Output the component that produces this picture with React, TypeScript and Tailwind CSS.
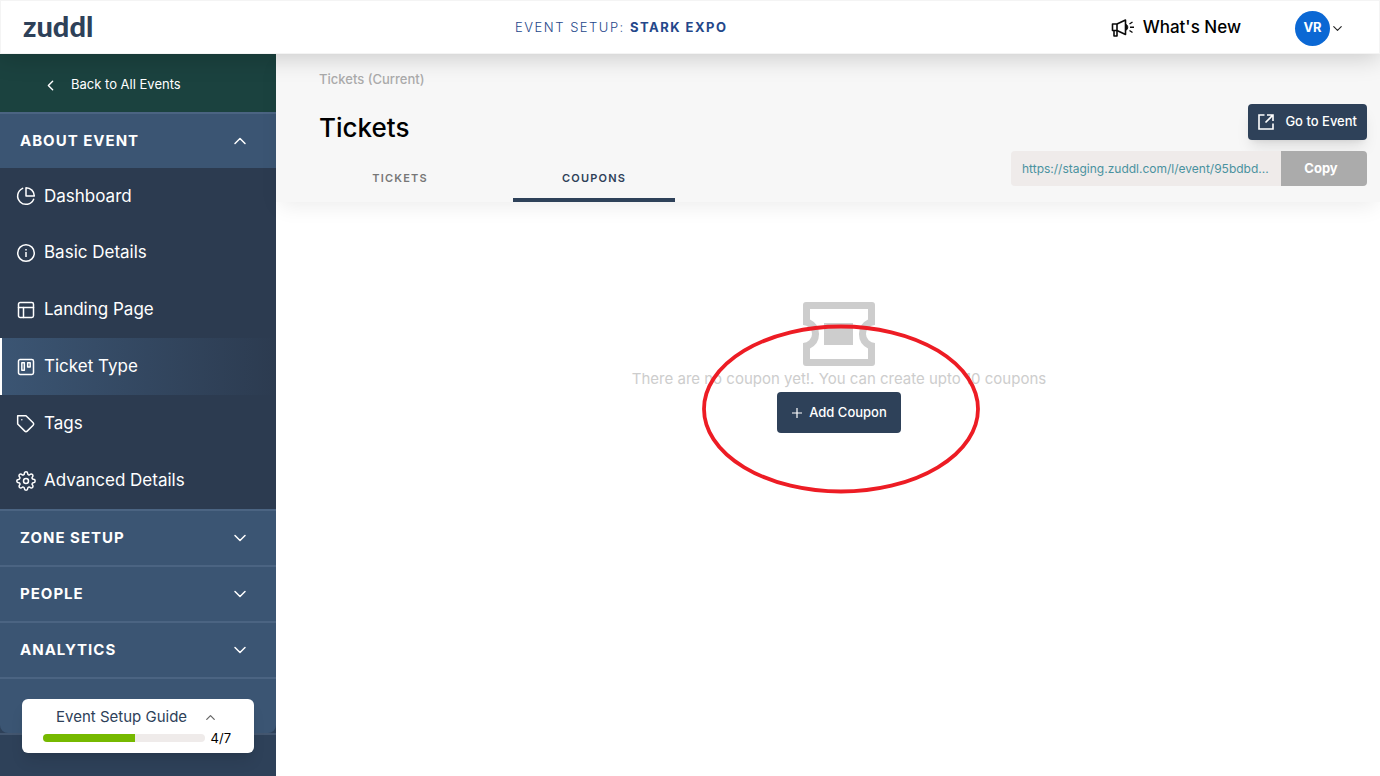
import React from "react";
import { FiPieChart, FiLayout, FiTrello, FiTag, FiSettings, FiChevronDown, FiChevronUp, FiChevronLeft } from "react-icons/fi";

function InfoIcon() {
  return (
    <svg aria-hidden="true" width="20" height="20" viewBox="0 0 20 20" fill="none" stroke="currentColor" strokeWidth="1.5">
      <circle cx="10" cy="10" r="8.3" />
      <path d="M10 9v5M10 6v1.6" />
    </svg>
  );
}

const navItems = [
  { label: "Dashboard", icon: <FiPieChart size={20} strokeWidth={1.8} /> },
  { label: "Basic Details", icon: <InfoIcon /> },
  { label: "Landing Page", icon: <FiLayout size={20} strokeWidth={1.8} /> },
  { label: "Ticket Type", icon: <FiTrello size={20} strokeWidth={1.8} />, active: true },
  { label: "Tags", icon: <FiTag size={20} strokeWidth={1.8} /> },
  { label: "Advanced Details", icon: <FiSettings size={20} strokeWidth={1.8} /> },
];

function MegaphoneIcon() {
  return (
    <svg aria-hidden="true" width="24" height="20" viewBox="0 0 24 20" fill="none" stroke="#0a0a0a" strokeWidth="1.6" strokeLinejoin="round">
      <path d="M1.500 6H6v6.500H1.500z" />
      <path d="M6 6 14.500 2v14.500L6 12.500" />
      <path d="M3 12.500V18h3v-5.500" />
      <path d="M15 6.500c2.300.6 2.300 5 0 5.600Z" fill="#0a0a0a" strokeWidth="1" />
      <path d="M19 9.300h4M18.500 6l3-2M18.500 12.500l3 2" strokeWidth="1.400" />
    </svg>
  );
}

function TicketIcon() {
  return (
    <svg aria-hidden="true" width="72" height="64" viewBox="0 0 72 64" fill="none">
      <path
        fillRule="evenodd"
        fill="#cdcdcd"
        d="M3 0h66a3 3 0 0 1 3 3v20a9 9 0 0 0 0 18v20a3 3 0 0 1-3 3H3a3 3 0 0 1-3-3V41a9 9 0 0 0 0-18V3a3 3 0 0 1 3-3ZM7 7v10.600A16 16 0 0 1 7 46.400V57h58V46.400A16 16 0 0 1 65 17.600V7Z"
      />
      <path fill="#cdcdcd" d="M21 21h29v22H21z" />
    </svg>
  );
}

function OpenIcon() {
  return (
    <svg aria-hidden="true" width="16" height="16" viewBox="0 0 16 16" fill="none" stroke="#fff" strokeWidth="1.600">
      <path d="M6.500 1H1v14h14V9.500" />
      <path d="M9 1h6v6M15 1 7.500 8.500" />
    </svg>
  );
}

function Section({ label, open = false }: { label: string; open?: boolean }) {
  const Chevron = open ? FiChevronUp : FiChevronDown;
  return (
    <button
      type="button"
      aria-expanded={open}
      className="flex h-14 w-full items-center justify-between border-t-2 border-[#4b6482] bg-[#3b5573] pr-[26px] pl-5 text-[15px] font-bold tracking-[1px] text-white"
    >
      {label}
      <Chevron size={20} strokeWidth={1.8} />
    </button>
  );
}

function Sidebar() {
  return (
    <aside className="flex w-[276px] shrink-0 flex-col bg-[#2e4159]">
      <a href="#events" className="flex h-[58px] items-center gap-3 bg-[#1b423f] pt-1 pl-[42px] text-[13px] text-white">
        <FiChevronLeft size={17} strokeWidth={2} />
        Back to All Events
      </a>
      <Section label="ABOUT EVENT" open />
      <nav className="grid h-[341px] grid-rows-6 bg-[#2c3b50]">
        {navItems.map(({ label, icon, active }) => (
          <a
            key={label}
            href="#section"
            aria-current={active ? "page" : undefined}
            className={
              active
                ? "flex items-center gap-2 border-l-2 border-white bg-linear-to-r from-[#3b5573] to-[#2c3b50] pl-[14px] text-[17px] text-white"
                : "flex items-center gap-2 pl-4 text-[17px] text-white"
            }
          >
            {icon}
            {label}
          </a>
        ))}
      </nav>
      <Section label="ZONE SETUP" />
      <Section label="PEOPLE" />
      <Section label="ANALYTICS" />
      <div className="relative">
        <div className="h-14 rounded-b-lg border-t-2 border-[#4b6482] bg-[#3b5573]" />
        <div className="border-t-2 border-[#43566f]" />
        <div className="absolute top-[22px] right-[22px] left-[22px] rounded-md bg-white pt-2 pb-1 shadow-lg">
          <button type="button" className="flex w-full items-center gap-4 pl-[34px] text-[15px] leading-5 text-[#2e4159]">
            Event Setup Guide
            <FiChevronUp size={15} color="#666" />
          </button>
          <div className="flex items-center gap-[6px] pr-[23px] pl-[21px]">
            <div className="h-2 flex-1 overflow-hidden rounded-full bg-[#efebea]">
              <div className="h-full w-4/7 bg-[#76b900]" />
            </div>
            <span className="text-[13px] leading-[22px] text-black">4/7</span>
          </div>
        </div>
      </div>
    </aside>
  );
}

export default function App() {
  return (
    <div className="flex min-h-screen flex-col bg-white font-['Inter',sans-serif]">
      <header className="relative z-10 flex h-[54px] items-center border border-[#f4f4f4] bg-white pt-0.5 pr-[34px] pl-[22px] shadow-[0_4px_24px_rgba(0,0,0,0.18)]">
        <a href="#home" className="w-[109px] pb-1 font-['Lato',sans-serif] text-[29px] leading-8 font-black text-[#2e4159]">
          zuddl
        </a>
        <p className="flex-1 text-center text-[13px] font-light tracking-[1.5px] text-[#24478a]">
          EVENT SETUP: <strong className="font-bold">STARK EXPO</strong>
        </p>
        <button type="button" className="flex items-center gap-2 text-[17px] font-medium text-black">
          <MegaphoneIcon />
          What's New
        </button>
        <button type="button" className="ml-[54px] flex items-center">
          <span className="flex size-[35px] items-center justify-center rounded-full bg-[#0b68d4] text-[13px] font-bold text-white">VR</span>
          <FiChevronDown size={15} strokeWidth={1.8} color="#222" />
        </button>
      </header>

      <div className="flex flex-1">
        <Sidebar />
        <main className="min-w-0 flex-1">
          <div className="flex h-[148px] justify-between bg-[#f7f7f7] pr-[13px] pl-[43px] shadow-[0_8px_20px_-4px_rgba(0,0,0,0.08)]">
            <div className="flex flex-col">
              <p className="pt-4 text-[13px] leading-[18px] font-medium text-[#ababab]">Tickets (Current)</p>
              <h1 className="pt-6 text-[26px] leading-8 font-medium text-black">Tickets</h1>
              <div role="tablist" className="mt-auto flex gap-8 text-[11px] font-semibold">
                <button type="button" role="tab" aria-selected="false" className="h-11 w-[162px] border-b-4 border-transparent tracking-[1.2px] text-[#777]">
                  TICKETS
                </button>
                <button type="button" role="tab" aria-selected="true" className="h-11 w-[162px] border-b-4 border-[#2e4159] tracking-[1.2px] text-[#2e4159]">
                  COUPONS
                </button>
              </div>
            </div>
            <div className="flex flex-col items-end gap-[11px] pt-[50px]">
              <a href="#event" className="flex h-9 items-center gap-[11px] rounded bg-[#2e4159] px-[10px] text-[13px] font-medium text-white shadow-lg">
                <OpenIcon />
                Go to Event
              </a>
              <div className="flex h-[35px] overflow-hidden rounded">
                <input
                  aria-label="Event link"
                  readOnly
                  value="https://staging.zuddl.com/l/event/95bdbd..."
                  className="w-[270px] bg-[#efebea] px-[11px] text-[12px] text-[#4a929f] outline-none"
                />
                <button type="button" className="w-[86px] bg-[#ababab] pr-1.5 text-[13px] font-bold text-white">
                  Copy
                </button>
              </div>
            </div>
          </div>

          <div className="pt-[100px] pr-[22px] pl-11">
            <div className="relative flex flex-col items-center">
              <TicketIcon />
              <p className="pt-0.5 pb-0.5 text-[15px] leading-[22px] text-[#cdcdcd]">There are no coupon yet!. You can create upto 10 coupons</p>
              <button type="button" className="flex h-[41px] items-center gap-[6px] rounded bg-[#2e4159] px-[14px] text-[13px] font-medium text-white">
                <svg aria-hidden="true" width="12" height="12" viewBox="0 0 12 12" stroke="#fff" strokeWidth="1.200">
                  <path d="M6 1v10M1 6h10" />
                </svg>
                Add Coupon
              </button>
              <svg aria-hidden="true" width="280" height="170" viewBox="0 0 280 170" fill="none" className="pointer-events-none absolute top-[22px] left-1/2 -ml-[138px]">
                <ellipse cx="140" cy="85" rx="137" ry="82.500" stroke="#ed1c24" strokeWidth="3.800" />
              </svg>
            </div>
          </div>
        </main>
      </div>
    </div>
  );
}
